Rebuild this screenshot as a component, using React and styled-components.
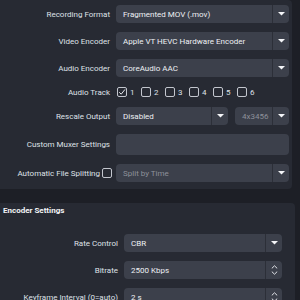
import React from "react";
import styled, { createGlobalStyle } from "styled-components";

const GlobalStyle = createGlobalStyle`
  html, body { margin: 0; padding: 0; background: #1d1f26; }
  body { font-family: Roboto, "Liberation Sans", sans-serif; -webkit-font-smoothing: antialiased; }
  #root { width: 300px; height: 300px; overflow: hidden; }
`;

const Page = styled.div`
  width: 300px;
  height: 300px;
  overflow: hidden;
  background: #1d1f26;
  display: flex;
  flex-direction: column;
  gap: 14px;
`;

const Panel = styled.section`
  box-sizing: border-box;
  width: ${(p) => p.$width}px;
  flex-shrink: 0;
  background: #272a33;
  border-radius: 0 4px 4px 0;
  padding: ${(p) => p.$pad};
`;

const Header = styled.div`
  height: 12px;
  line-height: 12px;
  padding-left: 3px;
  font-size: 8px;
  font-weight: 700;
  color: #f2f3f6;
  margin-bottom: 17px;
`;

const Form = styled.div`
  display: grid;
  grid-template-columns: ${(p) => p.$label}px 1fr;
  column-gap: 4px;
  row-gap: 9px;
  align-items: center;
`;

const Label = styled.div`
  display: flex;
  align-items: center;
  justify-content: flex-end;
  gap: 2px;
  padding-right: ${(p) => (p.$flush ? 0 : 2)}px;
  font-size: 8px;
  color: #dfe1e7;
  white-space: nowrap;
  height: 100%;
`;

const Field = styled.div`
  display: flex;
  gap: 7px;
  align-items: center;
`;

const Box = styled.div`
  box-sizing: border-box;
  display: flex;
  align-items: stretch;
  height: ${(p) => p.$h || 18}px;
  width: ${(p) => (p.$w ? `${p.$w}px` : "auto")};
  flex: ${(p) => (p.$w ? "0 0 auto" : "1 1 auto")};
  background: #3c404b;
  border-radius: 4px;
  overflow: hidden;
`;

const Value = styled.span`
  flex: 1;
  display: flex;
  align-items: center;
  padding-left: 7px;
  font-size: 8px;
  color: ${(p) => (p.$dim ? "#8d909a" : "#eef0f4")};
  white-space: nowrap;
  overflow: hidden;
`;

const ArrowBox = styled.span`
  width: 16px;
  flex: 0 0 16px;
  border-left: 1px solid #2c2f38;
  display: flex;
  flex-direction: column;
  align-items: center;
  justify-content: center;
  gap: 2px;
`;

const CheckRow = styled.div`
  display: flex;
  align-items: center;
  height: 12px;
  padding-left: 1px;
`;

const CheckItem = styled.label`
  display: flex;
  align-items: center;
  gap: 3px;
  width: 24px;
  flex: 0 0 24px;
  font-size: 8px;
  color: #dfe1e7;
`;

const CheckBox = styled.span`
  box-sizing: border-box;
  width: 10px;
  height: 10px;
  flex: 0 0 10px;
  border: 1px solid #c3c6ce;
  border-radius: 2px;
  display: flex;
  align-items: center;
  justify-content: center;
`;

const Arrow = () => (
  <svg width="7" height="4" viewBox="0 0 7 4">
    <polygon points="0,0 7,0 3.5,3.6" fill="#f4f5f8" />
  </svg>
);

const Chevron = ({ up }) => (
  <svg width="7" height="4" viewBox="0 0 7 4">
    <polyline
      points={up ? "0.8,3.4 3.5,0.8 6.2,3.4" : "0.8,0.6 3.5,3.2 6.2,0.6"}
      fill="none"
      stroke="#e4e6eb"
      strokeWidth="1"
    />
  </svg>
);

const Check = () => (
  <svg width="8" height="8" viewBox="0 0 8 8">
    <polyline points="1.2,4.2 3.2,6.2 7,1.4" fill="none" stroke="#e4e6eb" strokeWidth="1" />
  </svg>
);

const Select = ({ value, dim, w }) => (
  <Box $w={w}>
    <Value $dim={dim}>{value}</Value>
    <ArrowBox>
      <Arrow />
    </ArrowBox>
  </Box>
);

const Spin = ({ value }) => (
  <Box>
    <Value>{value}</Value>
    <ArrowBox>
      <Chevron up />
      <Chevron />
    </ArrowBox>
  </Box>
);

const Cb = ({ checked, children }) => (
  <CheckItem>
    <CheckBox>{checked && <Check />}</CheckBox>
    {children}
  </CheckItem>
);

export default function App() {
  return (
    <>
      <GlobalStyle />
      <Page>
        <Panel $width={292} $pad="5px 3px 7px 0">
          <Form $label={112}>
            <Label>Recording Format</Label>
            <Field>
              <Select value="Fragmented MOV (.mov)" />
            </Field>

            <Label>Video Encoder</Label>
            <Field>
              <Select value="Apple VT HEVC Hardware Encoder" />
            </Field>

            <Label>Audio Encoder</Label>
            <Field>
              <Select value="CoreAudio AAC" />
            </Field>

            <Label>Audio Track</Label>
            <CheckRow>
              <Cb checked>1</Cb>
              <Cb>2</Cb>
              <Cb>3</Cb>
              <Cb>4</Cb>
              <Cb>5</Cb>
              <Cb>6</Cb>
            </CheckRow>

            <Label>Rescale Output</Label>
            <Field>
              <Select value="Disabled" />
              <Select value="4x3456" dim w={54} />
            </Field>

            <Label>Custom Muxer Settings</Label>
            <Field>
              <Box $h={21} />
            </Field>

            <Label $flush>
              Automatic File Splitting
              <CheckBox />
            </Label>
            <Field>
              <Select value="Split by Time" dim />
            </Field>
          </Form>
        </Panel>

        <Panel $width={295} $pad="2px 13px 8px 0">
          <Header>Encoder Settings</Header>
          <Form $label={120}>
            <Label>Rate Control</Label>
            <Field>
              <Select value="CBR" />
            </Field>

            <Label>Bitrate</Label>
            <Field>
              <Spin value="2500 Kbps" />
            </Field>

            <Label>Keyframe Interval (0=auto)</Label>
            <Field>
              <Spin value="2 s" />
            </Field>
          </Form>
        </Panel>
      </Page>
    </>
  );
}
